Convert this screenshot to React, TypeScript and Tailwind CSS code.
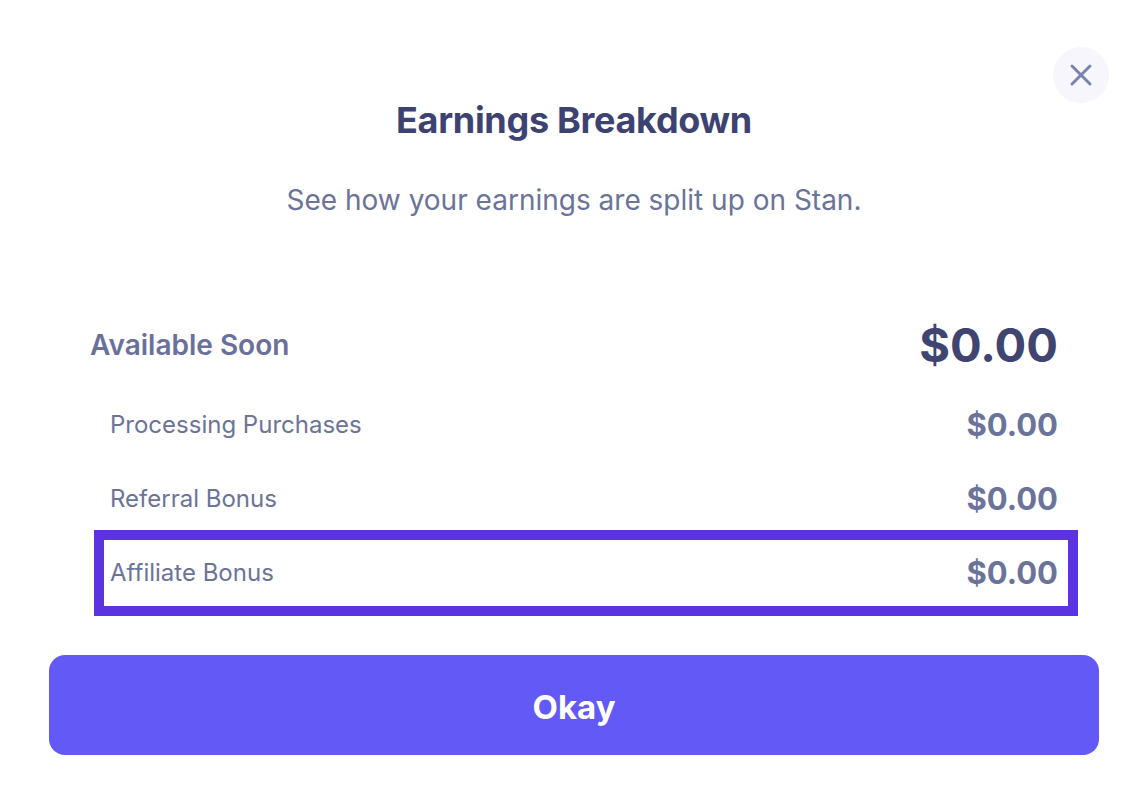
import { X } from "lucide-react";

const rows = [
  { label: "Processing Purchases", amount: "$0.00" },
  { label: "Referral Bonus", amount: "$0.00" },
];

export default function App() {
  return (
    <div className="relative w-[1148px] h-[808px] bg-white px-[49px] pt-[100px] font-['Inter',sans-serif]">
      {/* close */}
      <button className="absolute top-[47px] right-[39px] w-14 h-14 rounded-full bg-[#f6f6fc] flex items-center justify-center text-[#7b82ad]">
        <X size={36} strokeWidth={2} />
      </button>

      <h1 className="text-center text-[36px] leading-[40px] font-bold text-[#3e4270] tracking-[-0.3px]">
        Earnings Breakdown
      </h1>
      <p className="mt-[42px] text-center text-[28px] leading-[36px] text-[#6b7399]">
        See how your earnings are split up on Stan.
      </p>

      <div className="mt-[97px] mx-[41px]">
        <div className="flex items-center justify-between h-[60px]">
          <span className="text-[28px] font-semibold text-[#6a7099]">Available Soon</span>
          <span className="text-[47px] font-bold text-[#3f4470]">$0.00</span>
        </div>

        <div className="mt-[13px] pl-[20px]">
          {rows.map((r) => (
            <div key={r.label} className="flex items-center justify-between h-[74px]">
              <span className="text-[24px] text-[#6b7399]">{r.label}</span>
              <span className="text-[31px] font-bold text-[#6b7399]">{r.amount}</span>
            </div>
          ))}
          <div className="-mt-[6px] -ml-[16px] -mr-[20px] h-[86px] border-[10px] border-[#5b33e0] pl-[6px] pr-[10px] flex items-center justify-between">
            <span className="text-[24px] text-[#6b7399]">Affiliate Bonus</span>
            <span className="text-[31px] font-bold text-[#6b7399]">$0.00</span>
          </div>
        </div>
      </div>

      <button className="mt-[39px] w-full h-[100px] rounded-2xl bg-[#6259f6] text-white text-[33px] font-bold leading-[104px]">
        Okay
      </button>
    </div>
  );
}
